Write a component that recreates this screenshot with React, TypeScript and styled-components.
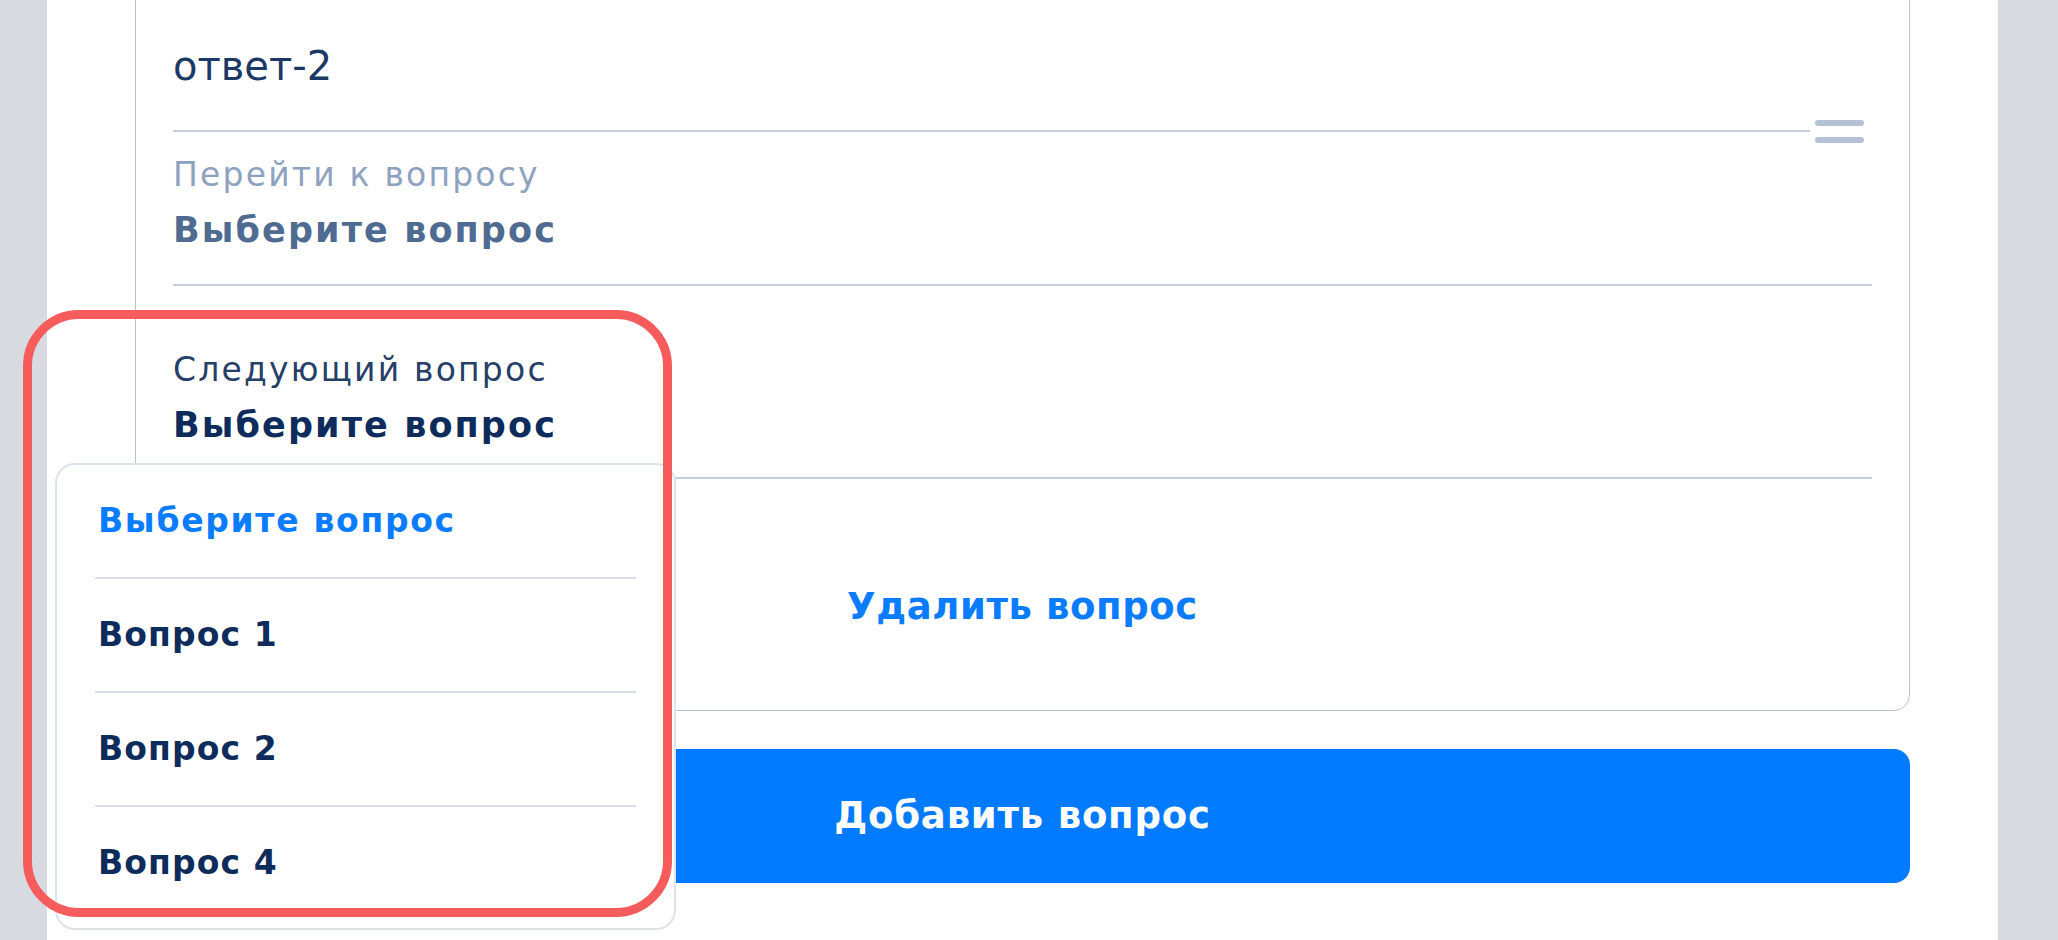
import React from "react";
import styled, { createGlobalStyle } from "styled-components";

const GlobalStyle = createGlobalStyle`
  html, body { margin: 0; padding: 0; }
  body { font-family: "DejaVu Sans", "Noto Sans", sans-serif; background: #ffffff; }
  *, *::before, *::after { box-sizing: border-box; }
`;

const Page = styled.div`
  position: relative;
  display: flex;
  height: 940px;
  overflow: hidden;
  background: #d7dae0;
  padding: 0 60px 0 47px;
`;

const Panel = styled.main`
  flex: 1;
  display: flex;
  flex-direction: column;
  background: #ffffff;
  padding: 0 88px;
`;

const Card = styled.section`
  display: flex;
  flex-direction: column;
  margin-top: -40px;
  padding: 81px 37px 0;
  border: 1px solid #b8c2d2;
  border-radius: 16px;
`;

const AnswerRow = styled.div`
  display: flex;
  align-items: flex-end;
`;

const AnswerInput = styled.div`
  flex: 1;
  font-size: 40px;
  line-height: 48px;
  color: #1c3866;
  padding-bottom: 40px;
  border-bottom: 2px solid #c7d0df;
`;

const DragHandle = styled.div`
  width: 49px;
  display: flex;
  flex-direction: column;
  gap: 11px;
  margin: 0 8px -11px 5px;
`;

const HandleBar = styled.span`
  display: block;
  height: 6px;
  border-radius: 3px;
  background: #b5c2d3;
`;

const SelectField = styled.div<{ $spaced?: boolean }>`
  position: relative;
  margin-top: ${(p) => (p.$spaced ? 41 : 0)}px;
  padding: 24px 0 ${(p) => (p.$spaced ? 31 : 33)}px;
  border-bottom: 2px solid #c7d0df;
`;

type Tone = "muted" | "strong";

const FieldLabel = styled.div<{ $tone: Tone }>`
  font-size: 33px;
  line-height: 38px;
  letter-spacing: 2.2px;
  color: ${(p) => (p.$tone === "muted" ? "#8ea2bf" : "#263f69")};
`;

const FieldValue = styled.div<{ $tone: Tone }>`
  margin-top: 15px;
  font-size: 35px;
  line-height: 42px;
  font-weight: 700;
  letter-spacing: 2.1px;
  color: ${(p) => (p.$tone === "muted" ? "#4f6b92" : "#0d2c5c")};
`;

const Menu = styled.ul`
  position: absolute;
  left: -118px;
  top: calc(100% - 14px);
  width: 621px;
  margin: 0;
  padding: 0 38px 9px;
  list-style: none;
  background: #ffffff;
  border: 2px solid #dde3ec;
  border-radius: 20px;
  z-index: 2;
`;

const MenuItem = styled.li<{ $active?: boolean }>`
  box-sizing: content-box;
  height: 112px;
  display: flex;
  align-items: center;
  padding-left: 3px;
  font-size: 33px;
  line-height: 40px;
  font-weight: 700;
  letter-spacing: ${(p) => (p.$active ? 1.7 : 1.1)}px;
  color: ${(p) => (p.$active ? "#0a7cff" : "#0d2c5c")};
  & + & {
    border-top: 2px solid #d6dee9;
  }
`;

const DeleteButton = styled.button`
  width: 100%;
  padding: 106px 0 81px;
  border: 0;
  background: none;
  font-family: inherit;
  font-size: 37px;
  line-height: 44px;
  font-weight: 700;
  letter-spacing: 0.6px;
  color: #0a7cff;
  text-align: center;
  cursor: pointer;
`;

const AddButton = styled.button`
  margin-top: 38px;
  height: 134px;
  border: 0;
  border-radius: 16px;
  background: #007bff;
  font-family: inherit;
  font-size: 37px;
  line-height: 44px;
  font-weight: 700;
  letter-spacing: 0.8px;
  color: #ffffff;
  cursor: pointer;
`;

const Highlight = styled.div`
  position: absolute;
  left: 23px;
  top: 310px;
  width: 649px;
  height: 607px;
  border: 9px solid #f65c5c;
  border-radius: 56px;
  pointer-events: none;
  z-index: 3;
`;

const options = ["Выберите вопрос", "Вопрос 1", "Вопрос 2", "Вопрос 4"];

export default function App() {
  return (
    <>
      <GlobalStyle />
      <Page>
        <Panel>
          <Card>
            <AnswerRow>
              <AnswerInput>ответ-2</AnswerInput>
              <DragHandle>
                <HandleBar />
                <HandleBar />
              </DragHandle>
            </AnswerRow>
            <SelectField>
              <FieldLabel $tone="muted">Перейти к вопросу</FieldLabel>
              <FieldValue $tone="muted">Выберите вопрос</FieldValue>
            </SelectField>
            <SelectField $spaced>
              <FieldLabel $tone="strong">Следующий вопрос</FieldLabel>
              <FieldValue $tone="strong">Выберите вопрос</FieldValue>
              <Menu>
                {options.map((o, i) => (
                  <MenuItem key={o} $active={i === 0}>
                    {o}
                  </MenuItem>
                ))}
              </Menu>
            </SelectField>
            <DeleteButton>Удалить вопрос</DeleteButton>
          </Card>
          <AddButton>Добавить вопрос</AddButton>
        </Panel>
        <Highlight />
      </Page>
    </>
  );
}
